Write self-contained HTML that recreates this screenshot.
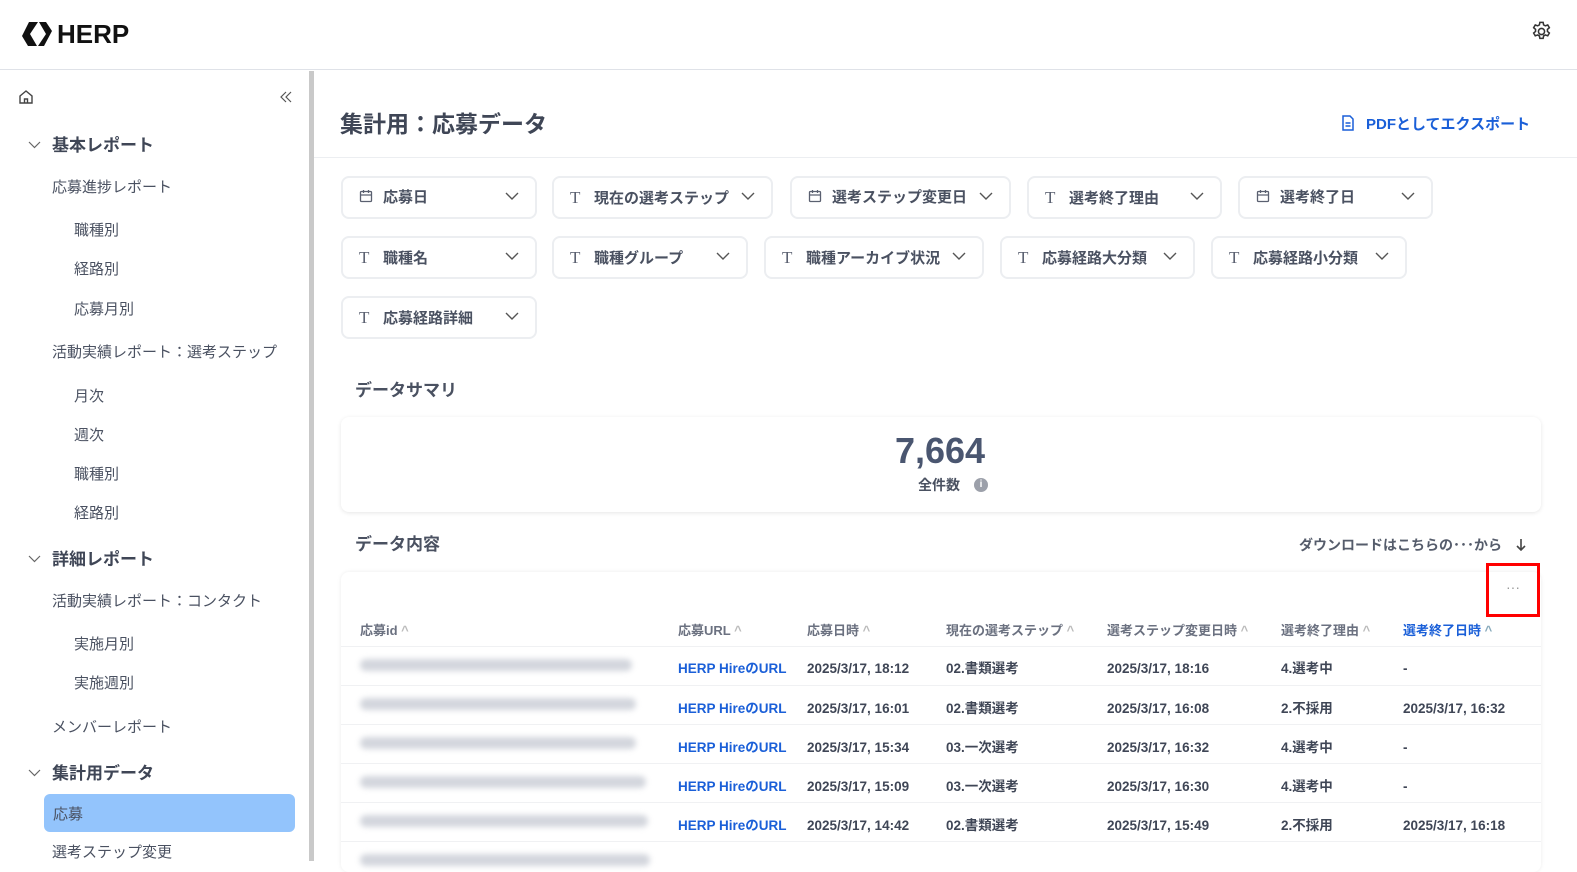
<!DOCTYPE html>
<html><head><meta charset="utf-8"><style>
*{box-sizing:border-box;margin:0;padding:0}
body{width:1577px;height:861px;overflow:hidden;background:#fff;font-family:"Liberation Sans","Noto Sans CJK JP",sans-serif;color:#3f4656;position:relative}
.a{position:absolute;white-space:nowrap;line-height:1.6}
.hdr{position:absolute;left:0;top:0;width:1577px;height:70px;border-bottom:1px solid #dfe2e8}
.side{position:absolute;left:0;top:71px;width:309px;height:790px}
.bar{position:absolute;left:309px;top:71px;width:5px;height:790px;background:#c9c9c9}
.s1{font-size:17px;font-weight:bold;color:#3f4656}
.s2{font-size:15px;color:#4a5161}
.f{position:absolute;height:43px;border:2px solid #eceef1;border-radius:8px;font-size:15px;font-weight:bold;color:#4a5161;padding-left:16px;line-height:40px;white-space:nowrap}
.f i{font-style:normal;font-family:"Liberation Serif",serif;font-weight:normal;font-size:17px;margin-right:10px;color:#5a6070;display:inline-block;width:14px}
.f svg.k{display:inline-block;vertical-align:-1px;margin-right:10px}
.f svg.c{position:absolute;right:16px;top:14px}
.th{font-size:13px;font-weight:bold;color:#6b7180;line-height:18px}
.td{font-size:13.5px;font-weight:bold;color:#3f4656;line-height:18px}
.lk{color:#1a5fd8}
.blur{position:absolute;height:12px;border-radius:6px;background:#d3d6dd;filter:blur(3px)}
.row{position:absolute;left:341px;width:1200px;height:1px;background:#f0f1f3}
</style></head><body>
<div class="hdr">
<svg class="a" style="left:21px;top:21px" width="32" height="26" viewBox="0 0 32 26"><path d="M8 1h9L9 13l7 12H7L1 15z M18 1h7l6 9-8 15h-6l8-12z" fill="#111"/></svg>
<div class="a" style="left:57px;top:18px;font-size:26px;font-weight:bold;color:#111;line-height:1.3">HERP</div>
<svg class="a" style="left:1530px;top:20px" width="23" height="23" viewBox="0 0 24 24" fill="none" stroke="#333" stroke-width="1.6"><circle cx="12" cy="12" r="3.2"/><path d="M10.3 2.5h3.4l.5 2.6 1.8 1 2.5-.9 1.7 2.9-2 1.7v2.1l2 1.7-1.7 2.9-2.5-.9-1.8 1-.5 2.6h-3.4l-.5-2.6-1.8-1-2.5.9-1.7-2.9 2-1.7v-2.1l-2-1.7 1.7-2.9 2.5.9 1.8-1z"/></svg>
</div>
<div class="side">
<svg class="a" style="left:18px;top:18px" width="16" height="16" viewBox="0 0 16 16" fill="none" stroke="#444" stroke-width="1.4"><path d="M2 7l6-5 6 5v7H2z M6.5 14v-4h3v4"/></svg>
<svg class="a" style="left:279px;top:19px" width="14" height="14" viewBox="0 0 14 14" fill="none" stroke="#555" stroke-width="1.2"><path d="M7 2L2 7l5 5M12 2L7 7l5 5"/></svg>
<svg class="a" style="left:28px;top:70px" width="13" height="8" viewBox="0 0 13 8" fill="none" stroke="#666" stroke-width="1.2"><path d="M1 1l5.5 5.5L12 1"/></svg>
<div class="a s1" style="left:52px;top:61px">基本レポート</div>
<div class="a s2" style="left:52px;top:105px">応募進捗レポート</div>
<div class="a s2" style="left:74px;top:148px">職種別</div>
<div class="a s2" style="left:74px;top:187px">経路別</div>
<div class="a s2" style="left:74px;top:227px">応募月別</div>
<div class="a s2" style="left:52px;top:270px">活動実績レポート：選考ステップ</div>
<div class="a s2" style="left:74px;top:314px">月次</div>
<div class="a s2" style="left:74px;top:353px">週次</div>
<div class="a s2" style="left:74px;top:392px">職種別</div>
<div class="a s2" style="left:74px;top:431px">経路別</div>
<svg class="a" style="left:28px;top:484px" width="13" height="8" viewBox="0 0 13 8" fill="none" stroke="#666" stroke-width="1.2"><path d="M1 1l5.5 5.5L12 1"/></svg>
<div class="a s1" style="left:52px;top:475px">詳細レポート</div>
<div class="a s2" style="left:52px;top:519px">活動実績レポート：コンタクト</div>
<div class="a s2" style="left:74px;top:562px">実施月別</div>
<div class="a s2" style="left:74px;top:601px">実施週別</div>
<div class="a s2" style="left:52px;top:645px">メンバーレポート</div>
<svg class="a" style="left:28px;top:698px" width="13" height="8" viewBox="0 0 13 8" fill="none" stroke="#666" stroke-width="1.2"><path d="M1 1l5.5 5.5L12 1"/></svg>
<div class="a s1" style="left:52px;top:689px">集計用データ</div>
<div class="a" style="left:44px;top:723px;width:251px;height:38px;background:#93c4fc;border-radius:6px"></div>
<div class="a s2" style="left:53px;top:732px">応募</div>
<div class="a s2" style="left:52px;top:770px">選考ステップ変更</div>
</div>
<div class="bar"></div>
<div class="a" style="left:314px;top:157px;width:1263px;height:1px;background:#eceef1"></div>
<div class="a" style="left:340px;top:106px;font-size:23px;font-weight:bold;color:#3f4656">集計用：応募データ</div>
<svg class="a" style="left:1341px;top:115px" width="14" height="16" viewBox="0 0 14 16" fill="none" stroke="#1a5fd8" stroke-width="1.5"><path d="M2 1h7l3 3v11H2z M4.5 8h5 M4.5 11h5"/></svg>
<div class="a" style="left:1366px;top:113px;font-size:15px;font-weight:bold;color:#1a5fd8">PDFとしてエクスポート</div>

<div class="f" style="left:341px;top:176px;width:196px"><svg class="k" width="14" height="14" viewBox="0 0 14 14" fill="none" stroke="#5a6070" stroke-width="1.3"><rect x="1.5" y="2.5" width="11" height="10" rx="1"/><path d="M1.5 6h11M4.5 1v3M9.5 1v3"/></svg>応募日<svg class="c" width="14" height="9" viewBox="0 0 14 9" fill="none" stroke="#555" stroke-width="1.4"><path d="M1 1l6 6 6-6"/></svg></div>
<div class="f" style="left:552px;top:176px;width:221px"><i>T</i>現在の選考ステップ<svg class="c" width="14" height="9" viewBox="0 0 14 9" fill="none" stroke="#555" stroke-width="1.4"><path d="M1 1l6 6 6-6"/></svg></div>
<div class="f" style="left:790px;top:176px;width:221px"><svg class="k" width="14" height="14" viewBox="0 0 14 14" fill="none" stroke="#5a6070" stroke-width="1.3"><rect x="1.5" y="2.5" width="11" height="10" rx="1"/><path d="M1.5 6h11M4.5 1v3M9.5 1v3"/></svg>選考ステップ変更日<svg class="c" width="14" height="9" viewBox="0 0 14 9" fill="none" stroke="#555" stroke-width="1.4"><path d="M1 1l6 6 6-6"/></svg></div>
<div class="f" style="left:1027px;top:176px;width:195px"><i>T</i>選考終了理由<svg class="c" width="14" height="9" viewBox="0 0 14 9" fill="none" stroke="#555" stroke-width="1.4"><path d="M1 1l6 6 6-6"/></svg></div>
<div class="f" style="left:1238px;top:176px;width:195px"><svg class="k" width="14" height="14" viewBox="0 0 14 14" fill="none" stroke="#5a6070" stroke-width="1.3"><rect x="1.5" y="2.5" width="11" height="10" rx="1"/><path d="M1.5 6h11M4.5 1v3M9.5 1v3"/></svg>選考終了日<svg class="c" width="14" height="9" viewBox="0 0 14 9" fill="none" stroke="#555" stroke-width="1.4"><path d="M1 1l6 6 6-6"/></svg></div>
<div class="f" style="left:341px;top:236px;width:196px"><i>T</i>職種名<svg class="c" width="14" height="9" viewBox="0 0 14 9" fill="none" stroke="#555" stroke-width="1.4"><path d="M1 1l6 6 6-6"/></svg></div>
<div class="f" style="left:552px;top:236px;width:196px"><i>T</i>職種グループ<svg class="c" width="14" height="9" viewBox="0 0 14 9" fill="none" stroke="#555" stroke-width="1.4"><path d="M1 1l6 6 6-6"/></svg></div>
<div class="f" style="left:764px;top:236px;width:220px"><i>T</i>職種アーカイブ状況<svg class="c" width="14" height="9" viewBox="0 0 14 9" fill="none" stroke="#555" stroke-width="1.4"><path d="M1 1l6 6 6-6"/></svg></div>
<div class="f" style="left:1000px;top:236px;width:195px"><i>T</i>応募経路大分類<svg class="c" width="14" height="9" viewBox="0 0 14 9" fill="none" stroke="#555" stroke-width="1.4"><path d="M1 1l6 6 6-6"/></svg></div>
<div class="f" style="left:1211px;top:236px;width:196px"><i>T</i>応募経路小分類<svg class="c" width="14" height="9" viewBox="0 0 14 9" fill="none" stroke="#555" stroke-width="1.4"><path d="M1 1l6 6 6-6"/></svg></div>
<div class="f" style="left:341px;top:296px;width:196px"><i>T</i>応募経路詳細<svg class="c" width="14" height="9" viewBox="0 0 14 9" fill="none" stroke="#555" stroke-width="1.4"><path d="M1 1l6 6 6-6"/></svg></div>

<div class="a" style="left:355px;top:377px;font-size:17px;font-weight:bold;color:#4a5161">データサマリ</div>
<div class="a" style="left:341px;top:417px;width:1200px;height:95px;border-radius:8px;box-shadow:0 1px 4px rgba(0,0,0,.1)"></div>
<div class="a" style="left:0;width:1880px;top:426px;text-align:center;font-size:36px;font-weight:bold;color:#4a5670;line-height:1.4">7,664</div>
<div class="a" style="left:918px;top:474px;font-size:14px;font-weight:bold;color:#4a5161">全件数</div>
<div class="a" style="left:974px;top:478px;width:14px;height:14px;border-radius:7px;background:#9ca0aa;color:#fff;font-size:10px;font-weight:bold;text-align:center;line-height:14px">i</div>

<div class="a" style="left:355px;top:531px;font-size:17px;font-weight:bold;color:#4a5161">データ内容</div>
<div class="a" style="left:1299px;top:534px;font-size:14px;font-weight:bold;color:#555c6b">ダウンロードはこちらの･･･から</div>
<svg class="a" style="left:1516px;top:538px" width="10" height="13" viewBox="0 0 10 13" fill="none" stroke="#444" stroke-width="1.6"><path d="M5 1v11M1 8l4 4 4-4"/></svg>
<div class="a" style="left:341px;top:572px;width:1200px;height:300px;border-radius:8px;box-shadow:0 0 4px rgba(0,0,0,.08)"></div>
<div class="a" style="left:1486px;top:563px;width:54px;height:54px;border:3px solid #f00"></div>
<div class="a" style="left:1506px;top:576px;font-size:14px;color:#999">···</div>

<div class="a th" style="left:360px;top:622px">応募id <span style="color:#bbb">^</span></div>
<div class="a th" style="left:678px;top:622px">応募URL <span style="color:#bbb">^</span></div>
<div class="a th" style="left:807px;top:622px">応募日時 <span style="color:#bbb">^</span></div>
<div class="a th" style="left:946px;top:622px">現在の選考ステップ <span style="color:#bbb">^</span></div>
<div class="a th" style="left:1107px;top:622px">選考ステップ変更日時 <span style="color:#bbb">^</span></div>
<div class="a th" style="left:1281px;top:622px">選考終了理由 <span style="color:#bbb">^</span></div>
<div class="a th" style="left:1403px;top:622px;color:#1a5fd8">選考終了日時 <span style="color:#8ab">^</span></div>
<div class="row" style="top:646px"></div><div class="row" style="top:685px"></div><div class="row" style="top:724px"></div><div class="row" style="top:763px"></div><div class="row" style="top:802px"></div><div class="row" style="top:841px"></div>

<div class="blur" style="left:360px;top:659px;width:272px"></div>
<div class="blur" style="left:360px;top:698px;width:276px"></div>
<div class="blur" style="left:360px;top:737px;width:276px"></div>
<div class="blur" style="left:360px;top:776px;width:286px"></div>
<div class="blur" style="left:360px;top:815px;width:288px"></div>
<div class="blur" style="left:360px;top:854px;width:290px"></div>

<div class="a td lk" style="left:678px;top:660px">HERP HireのURL</div>
<div class="a td" style="left:807px;top:660px">2025/3/17, 18:12</div>
<div class="a td" style="left:946px;top:660px">02.書類選考</div>
<div class="a td" style="left:1107px;top:660px">2025/3/17, 18:16</div>
<div class="a td" style="left:1281px;top:660px">4.選考中</div>
<div class="a td" style="left:1403px;top:660px">-</div>

<div class="a td lk" style="left:678px;top:700px">HERP HireのURL</div>
<div class="a td" style="left:807px;top:700px">2025/3/17, 16:01</div>
<div class="a td" style="left:946px;top:700px">02.書類選考</div>
<div class="a td" style="left:1107px;top:700px">2025/3/17, 16:08</div>
<div class="a td" style="left:1281px;top:700px">2.不採用</div>
<div class="a td" style="left:1403px;top:700px">2025/3/17, 16:32</div>

<div class="a td lk" style="left:678px;top:739px">HERP HireのURL</div>
<div class="a td" style="left:807px;top:739px">2025/3/17, 15:34</div>
<div class="a td" style="left:946px;top:739px">03.一次選考</div>
<div class="a td" style="left:1107px;top:739px">2025/3/17, 16:32</div>
<div class="a td" style="left:1281px;top:739px">4.選考中</div>
<div class="a td" style="left:1403px;top:739px">-</div>

<div class="a td lk" style="left:678px;top:778px">HERP HireのURL</div>
<div class="a td" style="left:807px;top:778px">2025/3/17, 15:09</div>
<div class="a td" style="left:946px;top:778px">03.一次選考</div>
<div class="a td" style="left:1107px;top:778px">2025/3/17, 16:30</div>
<div class="a td" style="left:1281px;top:778px">4.選考中</div>
<div class="a td" style="left:1403px;top:778px">-</div>

<div class="a td lk" style="left:678px;top:817px">HERP HireのURL</div>
<div class="a td" style="left:807px;top:817px">2025/3/17, 14:42</div>
<div class="a td" style="left:946px;top:817px">02.書類選考</div>
<div class="a td" style="left:1107px;top:817px">2025/3/17, 15:49</div>
<div class="a td" style="left:1281px;top:817px">2.不採用</div>
<div class="a td" style="left:1403px;top:817px">2025/3/17, 16:18</div>
</body></html>
